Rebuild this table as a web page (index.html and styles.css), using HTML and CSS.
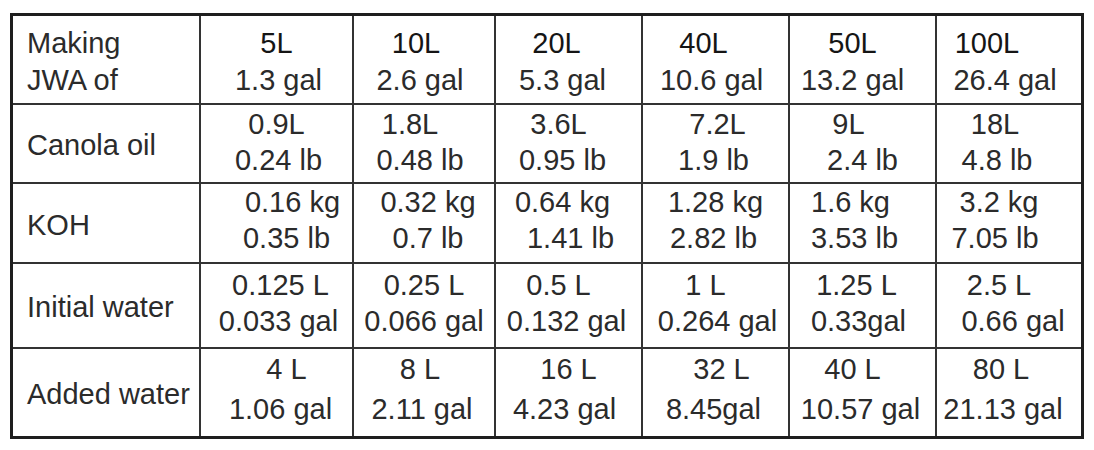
FILE: index.html
```html
<!DOCTYPE html>
<html>
<head>
<meta charset="utf-8">
<link rel="stylesheet" href="styles.css">
</head>
<body>
<table class="jwa">
  <colgroup>
    <col class="c-label">
    <col class="c-5">
    <col class="c-10">
    <col class="c-20">
    <col class="c-40">
    <col class="c-50">
    <col class="c-100">
  </colgroup>
  <tr class="r-head">
    <td class="label top"><div>Making</div><div>JWA of</div></td>
    <td><div class="hd">5L</div><div class="r2">1.3 gal</div></td>
    <td><div class="hd l8">10L</div><div class="l4">2.6 gal</div></td>
    <td><div class="hd l12">20L</div><div class="l6">5.3 gal</div></td>
    <td><div class="hd l12">40L</div><div class="l4">10.6 gal</div></td>
    <td><div class="hd l10">50L</div><div class="l10">13.2 gal</div></td>
    <td><div class="hd l22">100L</div><div class="l4">26.4 gal</div></td>
  </tr>
  <tr class="r-oil">
    <td class="label">Canola oil</td>
    <td><div>0.9L</div><div class="r2">0.24 lb</div></td>
    <td><div class="l14">1.8L</div><div class="l4">0.48 lb</div></td>
    <td><div class="l10">3.6L</div><div class="l6">0.95 lb</div></td>
    <td><div class="r2">7.2L</div><div class="l2">1.9 lb</div></td>
    <td><div class="l14">9L</div><div>2.4 lb</div></td>
    <td><div class="l14">18L</div><div class="l12">4.8 lb</div></td>
  </tr>
  <tr class="r-koh">
    <td class="label">KOH</td>
    <td><div class="r16">0.16 kg</div><div class="r10">0.35 lb</div></td>
    <td><div class="r4">0.32 kg</div><div class="r4">0.7 lb</div></td>
    <td><div class="l6">0.64 kg</div><div class="r2">1.41 lb</div></td>
    <td><div>1.28 kg</div><div class="l2">2.82 lb</div></td>
    <td><div class="l12">1.6 kg</div><div class="l8">3.53 lb</div></td>
    <td><div class="l10">3.2 kg</div><div class="l14">7.05 lb</div></td>
  </tr>
  <tr class="r-init">
    <td class="label">Initial water</td>
    <td><div class="r4">0.125 L</div><div class="r2">0.033 gal</div></td>
    <td><div>0.25 L</div><div>0.066 gal</div></td>
    <td><div class="l10">0.5 L</div><div class="l2">0.132 gal</div></td>
    <td><div class="l10">1 L</div><div class="r2">0.264 gal</div></td>
    <td><div class="l6">1.25 L</div><div class="l4">0.33gal</div></td>
    <td><div class="l10">2.5 L</div><div class="r4">0.66 gal</div></td>
  </tr>
  <tr class="r-add">
    <td class="label">Added water</td>
    <td><div class="r10">4 L</div><div class="r4">1.06 gal</div></td>
    <td><div class="l4">8 L</div><div class="l2">2.11 gal</div></td>
    <td><div>16 L</div><div class="l4">4.23 gal</div></td>
    <td><div class="r6">32 L</div><div class="l2">8.45gal</div></td>
    <td><div class="l10">40 L</div><div class="l2">10.57 gal</div></td>
    <td><div class="l8">80 L</div><div class="l6">21.13 gal</div></td>
  </tr>
</table>
</body>
</html>
```
FILE: styles.css
```css
html, body {
  margin: 0;
  padding: 0;
  background: #ffffff;
}

body {
  font-family: "Liberation Sans", Arial, Helvetica, sans-serif;
  font-size: 29px;
  color: #2b2b2b;
}

.jwa {
  margin: 13px 0 0 10px;
  border: 3px solid #1e1e1e;
  border-collapse: separate;
  border-spacing: 0;
  table-layout: fixed;
  width: 1074px;
}

.c-label { width: 188px; }
.c-5 { width: 153px; }
.c-10 { width: 142px; }
.c-20 { width: 147px; }
.c-40 { width: 147px; }
.c-50 { width: 147px; }
.c-100 { width: 144px; }

.jwa td {
  box-sizing: border-box;
  padding: 0;
  text-align: center;
  vertical-align: top;
  line-height: 36px;
  white-space: nowrap;
  border-right: 2px solid #333333;
  border-bottom: 2px solid #333333;
}

.jwa td:last-child { border-right: none; }
.jwa tr:last-child td { border-bottom: none; }

.jwa td.label {
  text-align: left;
  padding-left: 14px;
  vertical-align: middle;
  padding-top: 3px;
}

.jwa td.label.top {
  vertical-align: top;
}

.hd { color: #151515; }

/* per-line horizontal nudges, as in the source table (shift = half the padding) */
.r2 { padding-left: 4px; }
.r4 { padding-left: 8px; }
.r6 { padding-left: 12px; }
.r10 { padding-left: 20px; }
.r16 { padding-left: 32px; }
.l2 { padding-right: 4px; }
.l4 { padding-right: 8px; }
.l6 { padding-right: 12px; }
.l8 { padding-right: 16px; }
.l10 { padding-right: 20px; }
.l12 { padding-right: 24px; }
.l14 { padding-right: 28px; }
.l22 { padding-right: 44px; }

.r-head td { height: 89px; padding-top: 9px; line-height: 37px; }
.r-head td.label { padding-top: 9px; }
.r-oil td { height: 79px; padding-top: 1px; }
.r-koh td { height: 80px; padding-top: 0; }
.r-init td { height: 85px; padding-top: 3px; }
.r-add td { height: 87px; padding-top: 0; line-height: 40px; }
```
